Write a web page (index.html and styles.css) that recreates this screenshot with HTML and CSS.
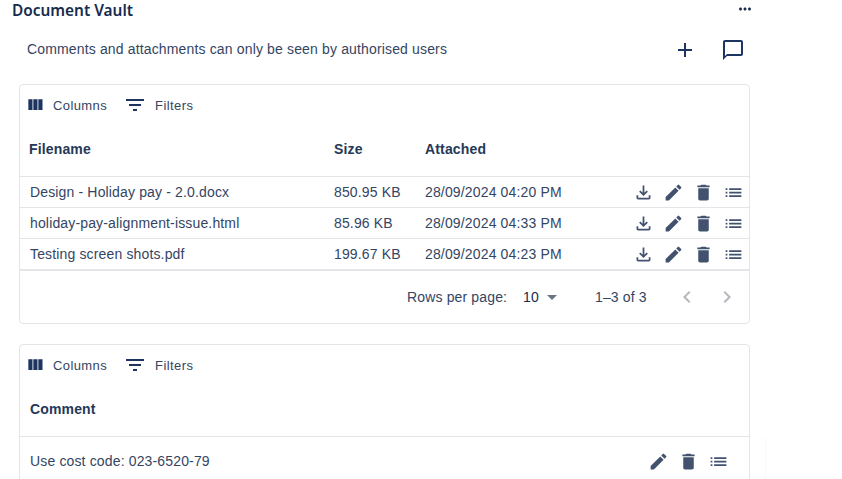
FILE: index.html
```html
<!DOCTYPE html>
<html>
	<head>
		<title>Document Vault</title>
		<meta charset="UTF-8"/>
		<link rel="stylesheet" href="styles.css">
	</head>
	<body>
		<svg class="defs" width="0" height="0">
			<symbol id="i-columns" viewBox="0 0 24 24"><path d="M10 18h5V5h-5v13zm-6 0h5V5H4v13zM16 5v13h5V5h-5z"/></symbol>
			<symbol id="i-filter" viewBox="0 0 24 24"><path d="M10 18h4v-2h-4v2zM3 6v2h18V6H3zm3 7h12v-2H6v2z"/></symbol>
			<symbol id="i-download" viewBox="0 0 24 24"><path d="M18 15v3H6v-3H4v3c0 1.1.9 2 2 2h12c1.1 0 2-.9 2-2v-3h-2zm-1-4-1.41-1.41L13 12.17V4h-2v8.17L8.41 9.59 7 11l5 5 5-5z"/></symbol>
			<symbol id="i-edit" viewBox="0 0 24 24"><path d="M3 17.25V21h3.75L17.81 9.94l-3.75-3.75L3 17.25zM20.71 7.04c.39-.39.39-1.02 0-1.41l-2.34-2.34a.9959.9959 0 0 0-1.41 0l-1.83 1.83 3.75 3.75 1.83-1.83z"/></symbol>
			<symbol id="i-delete" viewBox="0 0 24 24"><path d="M6 19c0 1.1.9 2 2 2h8c1.1 0 2-.9 2-2V7H6v12zM19 4h-3.5l-1-1h-5l-1 1H5v2h14V4z"/></symbol>
			<symbol id="i-list" viewBox="0 0 24 24"><path d="M3 13h2v-2H3v2zm0 4h2v-2H3v2zm0-8h2V7H3v2zm4 4h14v-2H7v2zm0 4h14v-2H7v2zM7 7v2h14V7H7z"/></symbol>
		</svg>

		<div class="page">
			<div class="titleBar">
				<h1 class="title">Document Vault</h1>
				<svg class="moreIcon" viewBox="0 0 24 24"><path d="M6 10c-1.1 0-2 .9-2 2s.9 2 2 2 2-.9 2-2-.9-2-2-2zm12 0c-1.1 0-2 .9-2 2s.9 2 2 2 2-.9 2-2-.9-2-2-2zm-6 0c-1.1 0-2 .9-2 2s.9 2 2 2 2-.9 2-2-.9-2-2-2z"/></svg>
			</div>

			<div class="noticeBar">
				<span class="notice">Comments and attachments can only be seen by authorised users</span>
				<div class="noticeActions">
					<svg class="noticeIcon" viewBox="0 0 24 24"><path d="M19 13h-6v6h-2v-6H5v-2h6V5h2v6h6v2z"/></svg>
					<svg class="noticeIcon" viewBox="0 0 24 24"><path d="M20 2H4c-1.1 0-2 .9-2 2v18l4-4h14c1.1 0 2-.9 2-2V4c0-1.1-.9-2-2-2zm0 14H6l-2 2V4h16v12z"/></svg>
				</div>
			</div>

			<div class="card">
				<div class="toolbar">
					<span class="toolButton"><svg class="columnsIcon"><use href="#i-columns"/></svg>Columns</span>
					<span class="toolButton"><svg class="filterIcon"><use href="#i-filter"/></svg>Filters</span>
				</div>
				<div class="headerRow">
					<span class="colName">Filename</span>
					<span class="colSize">Size</span>
					<span class="colDate">Attached</span>
				</div>
				<div class="dataRow">
					<span class="colName">Design - Holiday pay - 2.0.docx</span>
					<span class="colSize">850.95 KB</span>
					<span class="colDate">28/09/2024 04:20 PM</span>
					<span class="rowActions">
						<svg class="rowIcon"><use href="#i-download"/></svg>
						<svg class="rowIcon"><use href="#i-edit"/></svg>
						<svg class="rowIcon"><use href="#i-delete"/></svg>
						<svg class="rowIcon"><use href="#i-list"/></svg>
					</span>
				</div>
				<div class="dataRow">
					<span class="colName">holiday-pay-alignment-issue.html</span>
					<span class="colSize">85.96 KB</span>
					<span class="colDate">28/09/2024 04:33 PM</span>
					<span class="rowActions">
						<svg class="rowIcon"><use href="#i-download"/></svg>
						<svg class="rowIcon"><use href="#i-edit"/></svg>
						<svg class="rowIcon"><use href="#i-delete"/></svg>
						<svg class="rowIcon"><use href="#i-list"/></svg>
					</span>
				</div>
				<div class="dataRow lastRow">
					<span class="colName">Testing screen shots.pdf</span>
					<span class="colSize">199.67 KB</span>
					<span class="colDate">28/09/2024 04:23 PM</span>
					<span class="rowActions">
						<svg class="rowIcon"><use href="#i-download"/></svg>
						<svg class="rowIcon"><use href="#i-edit"/></svg>
						<svg class="rowIcon"><use href="#i-delete"/></svg>
						<svg class="rowIcon"><use href="#i-list"/></svg>
					</span>
				</div>
				<div class="pager">
					<span class="pagerLabel">Rows per page:</span>
					<span class="pagerSelect">10<svg class="pagerCaret" viewBox="0 0 24 24"><path d="m7 10 5 5 5-5z"/></svg></span>
					<span class="pagerCount">1–3 of 3</span>
					<svg class="pagerArrow" viewBox="0 0 24 24"><path d="M15.41 7.41 14 6l-6 6 6 6 1.41-1.41L10.83 12z"/></svg>
					<svg class="pagerArrow" viewBox="0 0 24 24"><path d="M10 6 8.59 7.41 13.17 12l-4.58 4.59L10 18l6-6z"/></svg>
				</div>
			</div>

			<div class="card commentCard">
				<div class="toolbar">
					<span class="toolButton"><svg class="columnsIcon"><use href="#i-columns"/></svg>Columns</span>
					<span class="toolButton"><svg class="filterIcon"><use href="#i-filter"/></svg>Filters</span>
				</div>
				<div class="headerRow commentHeader">
					<span class="colComment">Comment</span>
				</div>
				<div class="dataRow commentRow">
					<span class="colComment">Use cost code: 023-6520-79</span>
					<span class="rowActions commentActions">
						<svg class="rowIcon"><use href="#i-edit"/></svg>
						<svg class="rowIcon"><use href="#i-delete"/></svg>
						<svg class="rowIcon"><use href="#i-list"/></svg>
					</span>
				</div>
			</div>
		</div>
		<div class="edgeLine"></div>
	</body>
</html>
```

FILE: styles.css
```css
html, body {
	height: 100%;
	margin: 0;
	overflow: hidden;
	background: #fff;
}

body {
	font-family: "Liberation Sans", Arial, sans-serif;
	font-size: 14px;
	letter-spacing: 0.15px;
	color: #344563;
}

.defs {
	display: block;
	height: 0;
}

.page {
	width: 750px;
	padding-left: 12px;
}

/* faint edge of whatever sits behind the panel */
.edgeLine {
	position: absolute;
	left: 765px;
	top: 437px;
	bottom: 0;
	width: 1px;
	background: #f9f9fa;
}

/* heading */
.titleBar {
	display: flex;
	justify-content: space-between;
	align-items: center;
	height: 21px;
}

.title {
	margin: 0;
	font-family: "Noto Sans", sans-serif;
	font-size: 15.4px;
	font-weight: 600;
	letter-spacing: 0;
	line-height: 21px;
	color: #172b4d;
}

.moreIcon {
	width: 18px;
	height: 18px;
	margin: -3px 8px 0 0;
	fill: #172b4d;
}

.noticeBar {
	display: flex;
	justify-content: space-between;
	align-items: center;
	height: 48px;
	margin-top: 5px;
	padding-left: 15px;
}

.notice {
	margin-bottom: 2px;
}

.noticeActions {
	display: flex;
	gap: 24px;
	margin-right: 17px;
}

.noticeIcon {
	width: 24px;
	height: 24px;
	fill: #1d3461;
}

/* cards */
.card {
	width: 729px;
	margin: 10px 0 0 7px;
	border: 1px solid #e4e5e8;
	border-radius: 4px;
}

.commentCard {
	margin-top: 20px;
}

.toolbar {
	display: flex;
	align-items: center;
	height: 40px;
	padding-left: 5px;
}

.toolButton {
	display: flex;
	align-items: center;
	font-size: 13px;
	letter-spacing: 0.4px;
}

.columnsIcon {
	width: 20px;
	height: 20px;
	margin: -1px 8px 0 0;
	fill: #1d3461;
}

.filterIcon {
	width: 24px;
	height: 24px;
	margin: 0 8px 0 16px;
	fill: #1d3461;
}

.headerRow {
	box-sizing: border-box;
	display: flex;
	align-items: center;
	height: 52px;
	padding-bottom: 4px;
	font-weight: 700;
	color: #253858;
	border-bottom: 1px solid #e4e5e8;
}

.commentHeader {
	padding-bottom: 3px;
}

.dataRow {
	display: flex;
	align-items: center;
	height: 30px;
	border-bottom: 1px solid #e4e5e8;
}

.lastRow {
	border-bottom-width: 2px;
	height: 30px;
}

.commentRow {
	height: 48px;
}

.colName {
	width: 304px;
	margin-left: 10px;
	flex: none;
}

.headerRow .colName {
	margin-left: 9px;
	width: 305px;
}

.colSize {
	width: 91px;
	flex: none;
}

.colDate {
	flex: none;
	width: 208px;
}

.colComment {
	margin-left: 10px;
}

.rowActions {
	display: flex;
	gap: 9px;
	flex: none;
}

.commentActions {
	margin-left: auto;
	margin-right: 20px;
}

.rowIcon {
	width: 21px;
	height: 21px;
	fill: #42526e;
}

/* pagination */
.pager {
	display: flex;
	align-items: center;
	height: 52px;
	padding-left: 387px;
}

.pagerLabel {
	width: 116px;
	flex: none;
}

.pagerSelect {
	display: flex;
	align-items: center;
	width: 72px;
	flex: none;
	color: #172b4d;
}

.pagerCaret {
	width: 24px;
	height: 24px;
	margin-left: 1px;
	fill: #6b7280;
}

.pagerCount {
	width: 80px;
	flex: none;
}

.pagerArrow {
	flex: none;
	width: 24px;
	height: 24px;
	margin-right: 16px;
	fill: #b5b8be;
}
```
